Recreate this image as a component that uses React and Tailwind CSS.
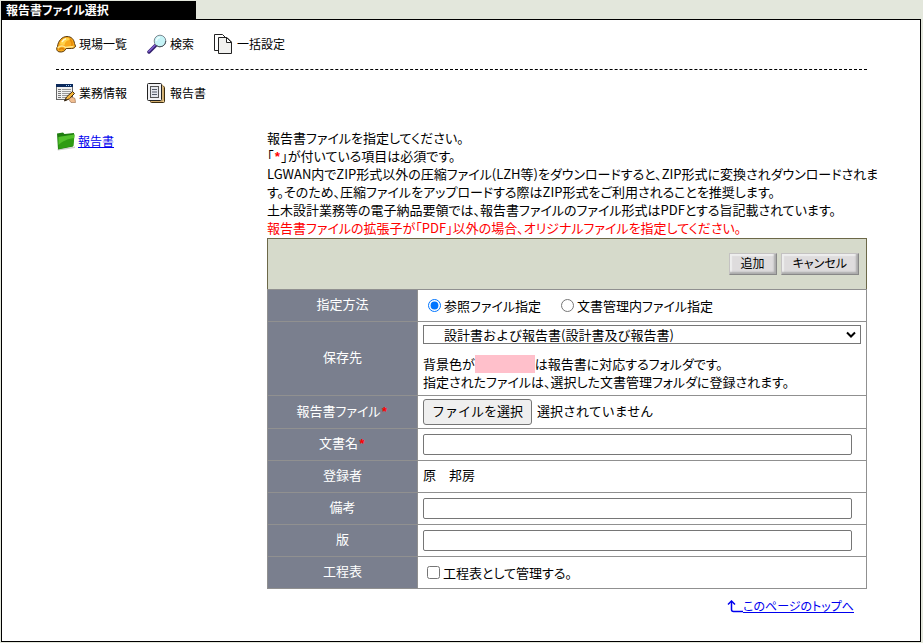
import { useRef, useState } from "react"

function HelmetIcon() {
    return (
        <svg width="20" height="20" viewBox="0 0 20 20" aria-hidden="true">
            <path d="M1.5 12.5 C2 7 6 2.5 11 2.5 C15.500 2.5 18 5.500 18.5 9.5 L19.5 12 C19.500 13.500 17.500 14.500 15.500 14.500 L10 14.500 C9 17.5 6 18.5 3 17.8 C0.5 17 0 14.5 1.5 12.5 Z" fill="#f8a91c" stroke="#5c3b0c" strokeWidth="1" />
            <path d="M4 10.500 C4.500 6.500 8 3.700 11 3.700 C13 4 14 5 14.500 6 C11 5.500 9 8 8.500 11 Z" fill="#ffd34a" />
            <path d="M6 8 C7 6 8.500 5 10 4.700" fill="none" stroke="#fff6c8" strokeWidth="1.500" />
            <path d="M14 5 C16 7.500 16.500 10 16 12.500" fill="none" stroke="#e58a08" strokeWidth="1.500" />
            <path d="M1.800 14 C4 11.500 7.500 11.500 9.500 13.500 L17.500 12.500" fill="none" stroke="#ffe68c" strokeWidth="1.500" />
            <path d="M3 15.500 C5 14 7 14.500 8 15.500" fill="none" stroke="#d97f08" strokeWidth="1.500" />
        </svg>
    )
}

function SearchIcon() {
    return (
        <svg width="20" height="20" viewBox="0 0 20 20" aria-hidden="true">
            <path d="M2 18 L8.5 11.500" stroke="#33206e" strokeWidth="3.500" strokeLinecap="round" />
            <path d="M1.800 17.500 L8 11.300" stroke="#8060d0" strokeWidth="1.500" strokeLinecap="round" />
            <circle cx="13" cy="7" r="5.800" fill="#c5f3f6" stroke="#7d8a92" />
            <path d="M18.800 7 A5.800 5.800 0 0 1 9 11.200" fill="none" stroke="#4c555c" />
            <path d="M9.500 7 A3.500 3.500 0 0 1 13 3.500" fill="none" stroke="#effeff" strokeWidth="1.500" />
        </svg>
    )
}

function PagesIcon() {
    return (
        <svg width="20" height="20" viewBox="0 0 20 20" aria-hidden="true">
            <path d="M0.500 0.500 H8.500 L12.500 4.500 V16.500 H0.500 Z" fill="#fff" stroke="#222" />
            <path d="M4.500 3.500 H13 L17.500 8 V19.500 H4.500 Z" fill="#f1f1ef" stroke="#222" />
            <path d="M12.500 3.500 V8.500 H17.500 Z" fill="#fff" stroke="#222" />
        </svg>
    )
}

function FormIcon() {
    return (
        <svg width="20" height="20" viewBox="0 0 20 20" aria-hidden="true">
            <rect x="0.500" y="1.500" width="16" height="15" fill="#f1f1f1" stroke="#666" />
            <rect x="0" y="1" width="17" height="3" fill="#0c2a5c" />
            <path d="M10 2.500 H11 M12 2.500 H13 M14 2.500 H15" stroke="#9fd0ff" />
            <path d="M2 6.500 H5 M2 8.500 H5 M2 10.500 H5 M2 12.500 H5 M2 14.500 H5" stroke="#777" />
            <path d="M6 6.500 H15 M6 8.500 H15 M6 10.500 H14 M6 12.500 H12 M6 14.500 H10" stroke="#999" />
            <path d="M8.500 18 L10.500 14 L16.500 8.500 L18.500 10.500 L13 16 Z" fill="#f3b53a" stroke="#3c260a" />
            <path d="M8.500 18 L10 15.500 L11 17 Z" fill="#222" />
            <path d="M12.500 16 L16 14 L19 15.500 L19.500 19.500 H15 Z" fill="#f0bd90" stroke="#80502a" strokeWidth="0.500" />
        </svg>
    )
}

function ReportIcon() {
    return (
        <svg width="20" height="20" viewBox="0 0 20 20" aria-hidden="true">
            <rect x="3.500" y="3.500" width="14" height="16" rx="1" fill="#f2cf90" stroke="#3a2c10" />
            <rect x="2.500" y="2" width="13.500" height="16" rx="1" fill="#fae6bc" stroke="#b08a48" />
            <rect x="0.500" y="0.500" width="14" height="17" rx="1" fill="#f2f2f4" stroke="#222" />
            <rect x="3.500" y="3.500" width="8" height="11" fill="#e4e6ec" stroke="#555" />
            <path d="M5 6.500 H10 M5 9 H10 M5 11.500 H10" stroke="#555b68" />
        </svg>
    )
}

function FolderIcon() {
    return (
        <svg width="20" height="20" viewBox="0 0 20 20" aria-hidden="true">
            <path d="M1 18.500 L19 15.500 V17 L2 19.500 Z" fill="#d0d0d0" />
            <path d="M1 2.500 L7 1.500 L8.500 3 L18 2 V4 L17 15.500 L2 18.500 Z" fill="#1f7d10" />
            <path d="M2.500 6 L18.500 3.500 L17.500 15 L2.500 18 Z" fill="#2f9c14" />
            <path d="M2.500 6 L18.500 3.500 L18.200 7 C11 8 7 10 2.500 14 Z" fill="#52c02c" />
        </svg>
    )
}

function TopIcon() {
    return (
        <svg width="16" height="13" viewBox="0 0 16 13" aria-hidden="true">
            <path d="M4.500 2 V9.500 Q4.500 11.500 6.500 11.500 H16" fill="none" stroke="#0000ee" strokeWidth="1.500" />
            <path d="M1 4.500 L4.500 1 L8 4.500" fill="none" stroke="#0000ee" strokeWidth="1.500" />
        </svg>
    )
}

function MenuItem({ icon, label }) {
    return (
        <a href="#" className="flex items-center gap-[3px] text-xs">
            {icon}
            {label}
        </a>
    )
}

function BevelButton({ children }) {
    return (
        <button type="button" className="h-[22px] border border-[#c4c2c2] border-r-[#888] border-b-[#888] bg-[#dedcdd] px-[11px] pb-0.5 text-xs leading-none shadow-[inset_-2px_-2px_2px_#aaa,inset_2px_2px_1px_#eee]">
            {children}
        </button>
    )
}

function Required() {
    return <span className="font-['Liberation_Mono',monospace] leading-none font-bold text-[#ff0000]">*</span>
}

function Row({ label, htmlFor, required, children }) {
    return (
        <tr className="h-8">
            <th scope="row" className="w-[150px] border border-[#909090] bg-[#7a7f8e] pb-[3px] text-center font-normal text-white">
                <label htmlFor={htmlFor}>{label}</label>
                {required && <Required />}
            </th>
            <td className="border border-[#909090] px-[5px]">{children}</td>
        </tr>
    )
}

function TextInput({ id }) {
    return (
        <input id={id} type="text" className="block h-[21px] w-[98%] rounded-[2px] border border-[#767676] bg-white px-1" />
    )
}

function App() {
    const fileRef = useRef(null)
    const [fileName, setFileName] = useState("")
    const [method, setMethod] = useState("local")

    const handleFileChange = (event) => {
        setFileName(event.target.files[0]?.name ?? "")
    }

    return (
        <div id="top" className="flex min-h-screen flex-col bg-[#e3e7dc] py-px pr-0.5 pl-px font-['Noto_Sans_CJK_JP','Liberation_Sans',sans-serif] text-[13px] leading-[18px] text-black [font-feature-settings:'palt']">
            <h1 className="h-[18px] w-[195px] bg-black px-[5px] text-xs leading-[18px] font-bold text-white">報告書ファイル選択</h1>
            <div className="grow border border-black bg-white pr-[53px] pl-[54px]">
                <nav className="flex gap-5 border-b border-dashed border-black pt-[14px] pb-[15px]">
                    <MenuItem icon={<HelmetIcon />} label="現場一覧" />
                    <MenuItem icon={<SearchIcon />} label="検索" />
                    <MenuItem icon={<PagesIcon />} label="一括設定" />
                </nav>
                <nav className="flex gap-5 pt-[13px]">
                    <MenuItem icon={<FormIcon />} label="業務情報" />
                    <MenuItem icon={<ReportIcon />} label="報告書" />
                </nav>
                <div className="flex pt-[26px]">
                    <aside className="w-[211px] shrink-0 pt-0.5">
                        <a href="#" className="flex items-center gap-0.5 text-xs text-[#0000ee]">
                            <FolderIcon />
                            <span className="underline">報告書</span>
                        </a>
                    </aside>
                    <main className="min-w-0 grow">
                        <div className="pb-px whitespace-nowrap">
                            <p>報告書ファイルを指定してください。</p>
                            <p>「<Required />」が付いている項目は必須です。</p>
                            <p>
                                LGWAN内でZIP形式以外の圧縮ファイル(LZH等)をダウンロードすると、ZIP形式に変換されダウンロードされま<br />
                                す。そのため、圧縮ファイルをアップロードする際はZIP形式をご利用されることを推奨します。
                            </p>
                            <p>土木設計業務等の電子納品要領では、報告書ファイルのファイル形式はPDFとする旨記載されています。</p>
                            <p className="text-[#ff0000]">報告書ファイルの拡張子が「PDF」以外の場合、オリジナルファイルを指定してください。</p>
                        </div>
                        <form onSubmit={(event) => event.preventDefault()}>
                            <div className="flex h-[51px] items-center justify-end gap-1 border border-b-0 border-[#6c6848] bg-[#d6dacb] pr-[7px]">
                                <BevelButton>追加</BevelButton>
                                <BevelButton>キャンセル</BevelButton>
                            </div>
                            <table className="w-full border-collapse border-t border-[#6c6848]">
                                <tbody>
                                    <Row label="指定方法">
                                        <div className="flex gap-5 pl-[5px]">
                                            <label className="flex items-center gap-[3px]">
                                                <input type="radio" name="method" checked={method === "local"} onChange={() => setMethod("local")} className="size-[13px]" />
                                                参照ファイル指定
                                            </label>
                                            <label className="flex items-center gap-[3px]">
                                                <input type="radio" name="method" checked={method === "managed"} onChange={() => setMethod("managed")} className="size-[13px]" />
                                                文書管理内ファイル指定
                                            </label>
                                        </div>
                                    </Row>
                                    <Row label="保存先" htmlFor="folder">
                                        <div className="relative mt-[3px] mb-[11px]">
                                            <select id="folder" className="block h-[19px] w-full appearance-none border border-[#767676] bg-white pr-6 pl-5 text-[13px] leading-[17px] [font-feature-settings:normal]">
                                                <option>設計書および報告書(設計書及び報告書)</option>
                                            </select>
                                            <svg className="pointer-events-none absolute top-[6px] right-[5px]" width="10" height="7" viewBox="0 0 10 7" aria-hidden="true">
                                                <path d="M1 1.500 L5 5.500 L9 1.500" fill="none" stroke="#000" strokeWidth="2" />
                                            </svg>
                                        </div>
                                        <p className="flex">背景色が<span className="w-[60px] bg-[#ffc0cb]"></span>は報告書に対応するフォルダです。</p>
                                        <p className="pb-1">指定されたファイルは、選択した文書管理フォルダに登録されます。</p>
                                    </Row>
                                    <Row label="報告書ファイル" htmlFor="report-file" required>
                                        <div className="flex items-center gap-[5px] py-[3px] [font-feature-settings:normal]">
                                            <input id="report-file" ref={fileRef} type="file" onChange={handleFileChange} className="hidden" />
                                            <button type="button" onClick={() => fileRef.current.click()} className="h-[26px] rounded-[3px] border border-[#767676] bg-[#efefef] px-2 pb-0.5">ファイルを選択</button>
                                            <span className="pb-0.5">{fileName || "選択されていません"}</span>
                                        </div>
                                    </Row>
                                    <Row label="文書名" htmlFor="doc-name" required>
                                        <TextInput id="doc-name" />
                                    </Row>
                                    <Row label="登録者">
                                        <p className="pb-[3px]">原　邦房</p>
                                    </Row>
                                    <Row label="備考" htmlFor="note">
                                        <TextInput id="note" />
                                    </Row>
                                    <Row label="版" htmlFor="edition">
                                        <TextInput id="edition" />
                                    </Row>
                                    <Row label="工程表">
                                        <label className="flex items-center gap-[3px] pl-1">
                                            <input type="checkbox" className="size-[13px]" />
                                            工程表として管理する。
                                        </label>
                                    </Row>
                                </tbody>
                            </table>
                        </form>
                        <div className="flex justify-end pt-2 pr-[13px]">
                            <a href="#top" className="flex items-center text-xs leading-[18px] text-[#0000ee]">
                                <TopIcon />
                                <span className="underline">このページのトップへ</span>
                            </a>
                        </div>
                    </main>
                </div>
            </div>
        </div>
    )
}

export default App
